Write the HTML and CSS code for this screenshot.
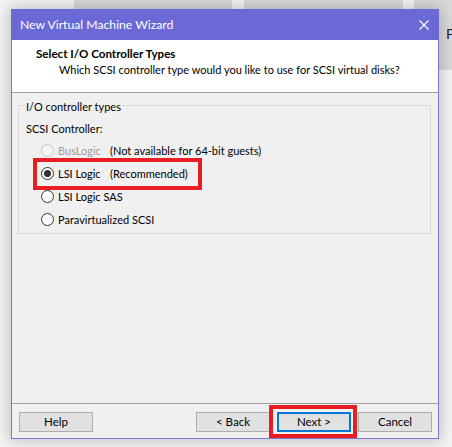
FILE: index.html
```html
<!DOCTYPE html>
<html>
<head>
<meta charset="utf-8">
<link rel="stylesheet" href="styles.css">
</head>
<body>
<div class="desktop">
  <div class="bgwin bw1"></div>
  <div class="bgwin bw2"></div>
  <div class="bgwin bw3"></div>
  <span class="peek">P</span>

  <div class="wizard">
    <div class="titlebar">
      <span class="title">New Virtual Machine Wizard</span>
      <svg class="close" width="10" height="10" viewBox="0 0 10 10"><path d="M0.5 0.5 L9.5 9.5 M9.5 0.5 L0.5 9.5" stroke="#fff" stroke-width="1.1" fill="none"/></svg>
    </div>
    <div class="header">
      <div class="h-title">Select I/O Controller Types</div>
      <div class="h-sub">Which SCSI controller type would you like to use for SCSI virtual disks?</div>
    </div>
    <div class="content">
      <div class="group">
        <span class="legend">I/O controller types</span>
        <div class="label">SCSI Controller:</div>
        <div class="options">
          <div class="opt disabled"><span class="radio"></span><span class="name">BusLogic</span><span class="note">(Not available for 64-bit guests)</span></div>
          <div class="opt"><span class="radio checked"></span><span class="name">LSI Logic</span><span class="note">(Recommended)</span></div>
          <div class="opt"><span class="radio"></span><span class="name">LSI Logic SAS</span></div>
          <div class="opt"><span class="radio"></span><span class="name">Paravirtualized SCSI</span></div>
        </div>
      </div>
    </div>
    <div class="footer">
      <button class="btn">Help</button>
      <div class="btn-group">
        <button class="btn">&lt; Back</button>
        <button class="btn default">Next &gt;</button>
        <button class="btn">Cancel</button>
      </div>
    </div>
  </div>

  <div class="highlight hl-lsi"></div>
  <div class="highlight hl-next"></div>
</div>
</body>
</html>
```

FILE: styles.css
```css
* { box-sizing: border-box; }

html, body {
  margin: 0;
  padding: 0;
  width: 452px;
  height: 447px;
  overflow: hidden;
  background: #f5f5f5;
  font-family: Lato, "Noto Sans", sans-serif;
  font-size: 11px;
  color: #000;
}

.desktop {
  position: relative;
  width: 452px;
  height: 447px;
  padding: 9px 0 0 11px;
}

.bgwin {
  position: absolute;
  top: 0;
  height: 60px;
  background: #dadada;
}
.bw1 { left: 74px; width: 158px; }
.bw2 { left: 244px; width: 159px; }
.bw3 { left: 414px; width: 38px; height: 70px; }

.peek {
  position: absolute;
  left: 446px;
  top: 25px;
  width: 6px;
  overflow: hidden;
  font-size: 14px;
  line-height: 18px;
  color: #222;
}

.wizard {
  position: relative;
  z-index: 1;
  width: 428px;
  height: 430px;
  border: 1px solid #7878d9;
  border-top-color: #6b69d6;
  background: #f0f0f0;
  box-shadow: 0 0 14px 2px rgba(0, 0, 0, 0.22);
  display: flex;
  flex-direction: column;
}

.titlebar {
  height: 30px;
  background: #6b69d6;
  display: flex;
  align-items: center;
  justify-content: space-between;
  color: #fff;
  margin: 0 -1px;
  padding-left: 9px;
  padding-right: 10px;
  font-size: 12.2px;
}
.title { line-height: 16px; white-space: nowrap; }
.close { display: block; }

.header {
  height: 53px;
  background: #fff;
  border-bottom: 1px solid #a0a0a0;
  padding: 6px 0 0 24px;
  line-height: 16px;
  white-space: nowrap;
}
.h-title { font-weight: bold; font-size: 11.6px; }
.h-sub { padding-left: 23px; }

.content {
  height: 310px;
  padding: 12px 7px 0 6px;
}

.group {
  position: relative;
  border: 1px solid #d9d9d9;
  padding: 15px 0 2px 7px;
  line-height: 16px;
}
.legend {
  position: absolute;
  top: -7px;
  left: 6px;
  padding: 0 1px;
  background: #f0f0f0;
}
.label { height: 16px; }
.options { margin-top: 2px; padding-left: 15px; }

.opt {
  height: 23px;
  display: flex;
  align-items: center;
  white-space: nowrap;
}
.radio {
  width: 13px;
  height: 13px;
  border-radius: 50%;
  border: 1px solid #333;
  background: #fff;
  margin-right: 4px;
  display: flex;
  align-items: center;
  justify-content: center;
  flex: none;
}
.radio.checked::after {
  content: "";
  width: 7px;
  height: 7px;
  border-radius: 50%;
  background: #333;
}
.name { width: 52px; }
.disabled .radio { border-color: #c4c4c4; background: #f4f4f4; }
.disabled .name { color: #9d9d9d; }

.footer {
  height: 35px;
  border-top: 1px solid #a0a0a0;
  padding: 8px 6px 0 7px;
  display: flex;
  justify-content: space-between;
  align-items: flex-start;
}
.btn-group { display: flex; gap: 7px; }
.btn {
  width: 74px;
  height: 20px;
  border: 1px solid #adadad;
  background: #e1e1e1;
  font-family: inherit;
  font-size: 11.5px;
  color: #000;
  padding: 0;
  line-height: 16px;
}
.btn.default {
  border-color: #0078d7;
  box-shadow: inset 0 0 0 1px #0078d7;
}

.highlight {
  position: absolute;
  z-index: 2;
  border: 4px solid #e81c24;
}
.hl-lsi { left: 33px; top: 158px; width: 169px; height: 32px; }
.hl-next { left: 269px; top: 405px; width: 88px; height: 33px; }
```
